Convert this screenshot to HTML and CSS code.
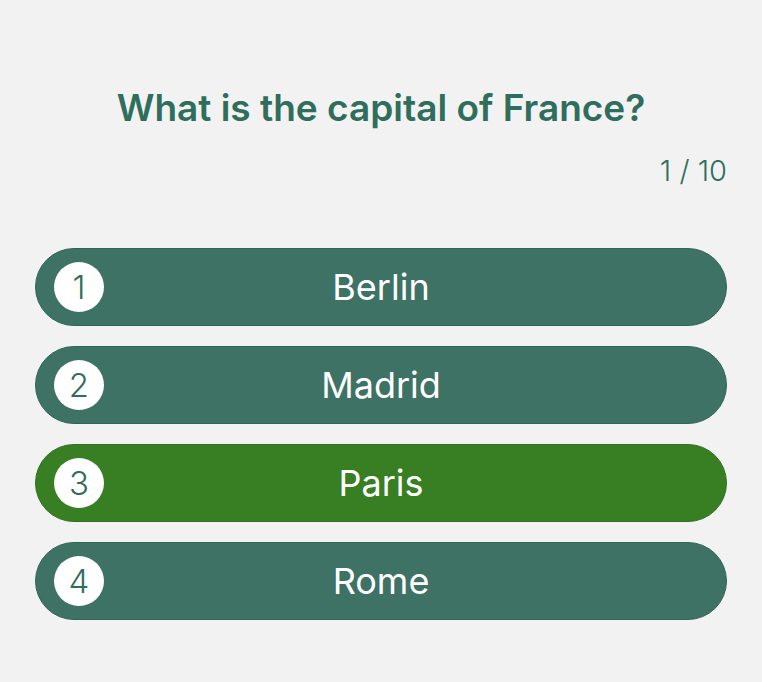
FILE: index.html
```html
<!DOCTYPE html>
<html>
<head>
<meta charset="utf-8">
<link rel="stylesheet" href="styles.css">
</head>
<body>
<main class="quiz">
  <h1 class="question">What is the capital of France?</h1>
  <div class="counter">1 / 10</div>
  <div class="answers">
    <button class="answer"><span class="num">1</span><span class="label">Berlin</span></button>
    <button class="answer"><span class="num">2</span><span class="label">Madrid</span></button>
    <button class="answer correct"><span class="num">3</span><span class="label">Paris</span></button>
    <button class="answer"><span class="num">4</span><span class="label">Rome</span></button>
  </div>
</main>
</body>
</html>
```
FILE: styles.css
```css
html, body {
  margin: 0;
  padding: 0;
  background: #f2f2f2;
}
body {
  font-family: Inter, "Noto Sans", sans-serif;
  width: 762px;
  height: 682px;
}
.quiz {
  padding: 84px 35px 0;
  display: flex;
  flex-direction: column;
}
.question {
  margin: 0;
  text-align: center;
  font-size: 37px;
  font-weight: 600;
  color: #2f6e5c;
  line-height: 48px;
}
.counter {
  margin-top: 21px;
  text-align: right;
  font-size: 29px;
  font-weight: 300;
  color: #2f6e5c;
  line-height: 36px;
}
.answers {
  margin-top: 59px;
  display: flex;
  flex-direction: column;
  gap: 20px;
}
.answer {
  position: relative;
  height: 78px;
  border-radius: 39px;
  background: #3e7265;
  border: 1px solid #2f6654;
  display: flex;
  align-items: center;
  justify-content: center;
  padding: 0;
  font-family: inherit;
  cursor: pointer;
}
.answer.correct {
  background: #387e22;
  border-color: #2e731b;
}
.num {
  position: absolute;
  left: 18px;
  top: 13px;
  width: 50px;
  height: 50px;
  border-radius: 50%;
  background: #ffffff;
  color: #2f6e5c;
  font-size: 33px;
  font-weight: 350;
  display: flex;
  align-items: center;
  justify-content: center;
}
.label {
  color: #ffffff;
  font-size: 36px;
  font-weight: 400;
}
```
